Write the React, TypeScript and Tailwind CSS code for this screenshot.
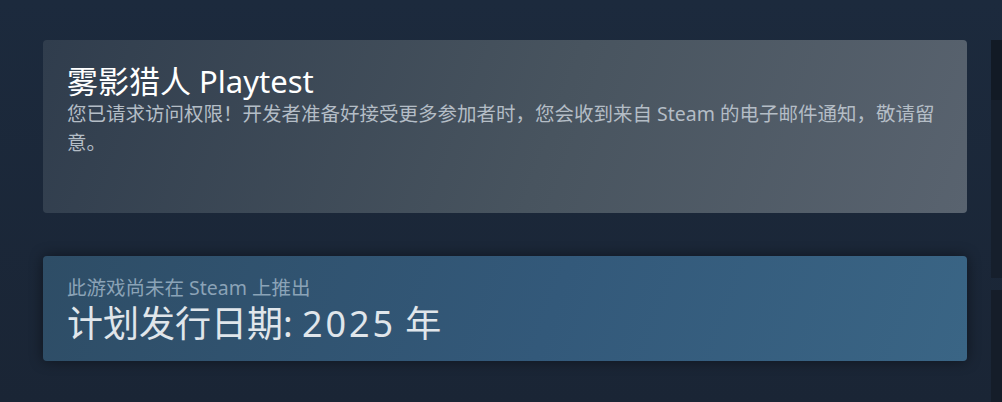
const font = { fontFamily: '"Noto Sans", "Noto Sans CJK SC", sans-serif' };

export default function App() {
  return (
    <div
      className="flex h-[402px] w-[1002px] overflow-hidden bg-[linear-gradient(180deg,#1c2a3d_0%,#1a2535_100%)]"
      style={font}
    >
      {/* main column */}
      <div className="flex w-[991px] flex-col pl-[43px] pr-[24px] pt-[40px]">
        {/* playtest card */}
        <div className="h-[173px] rounded-[4px] bg-[linear-gradient(110deg,#303d4d_0%,#48545f_55%,#59636f_100%)] px-[24px] pt-[23px]">
          <h1 className="text-[31px] leading-[37px] font-normal text-white">雾影猎人 Playtest</h1>
          <p className="text-[19.5px] leading-[28.5px] text-[#b4bdc6]">
            您已请求访问权限！开发者准备好接受更多参加者时，您会收到来自 Steam 的电子邮件通知，敬请留意。
          </p>
        </div>

        {/* release date card */}
        <div className="mt-[43px] h-[105px] rounded-[4px] bg-[linear-gradient(110deg,#2e4d66_0%,#33597a_55%,#3a6585_100%)] px-[24px] pt-[20px] shadow-[0_0_14px_rgba(0,0,0,0.45)]">
          <div className="text-[19.5px] leading-[24px] text-[#8ba3b7]">此游戏尚未在 Steam 上推出</div>
          <div className="text-[36px] leading-[48px] text-[#e0e6eb]">
            计划发行日期: <span className="tracking-[0.08em]">2025</span> 年
          </div>
        </div>
      </div>

      {/* partially visible sidebar */}
      <div className="mt-[40px] flex w-[11px] flex-col">
        <div className="h-[60px] bg-[#121a25]" />
        <div className="h-[178px] bg-[#161f2c]" />
        <div className="h-[12px]" />
        <div className="flex-1 bg-[#151d29]" />
      </div>
    </div>
  );
}
